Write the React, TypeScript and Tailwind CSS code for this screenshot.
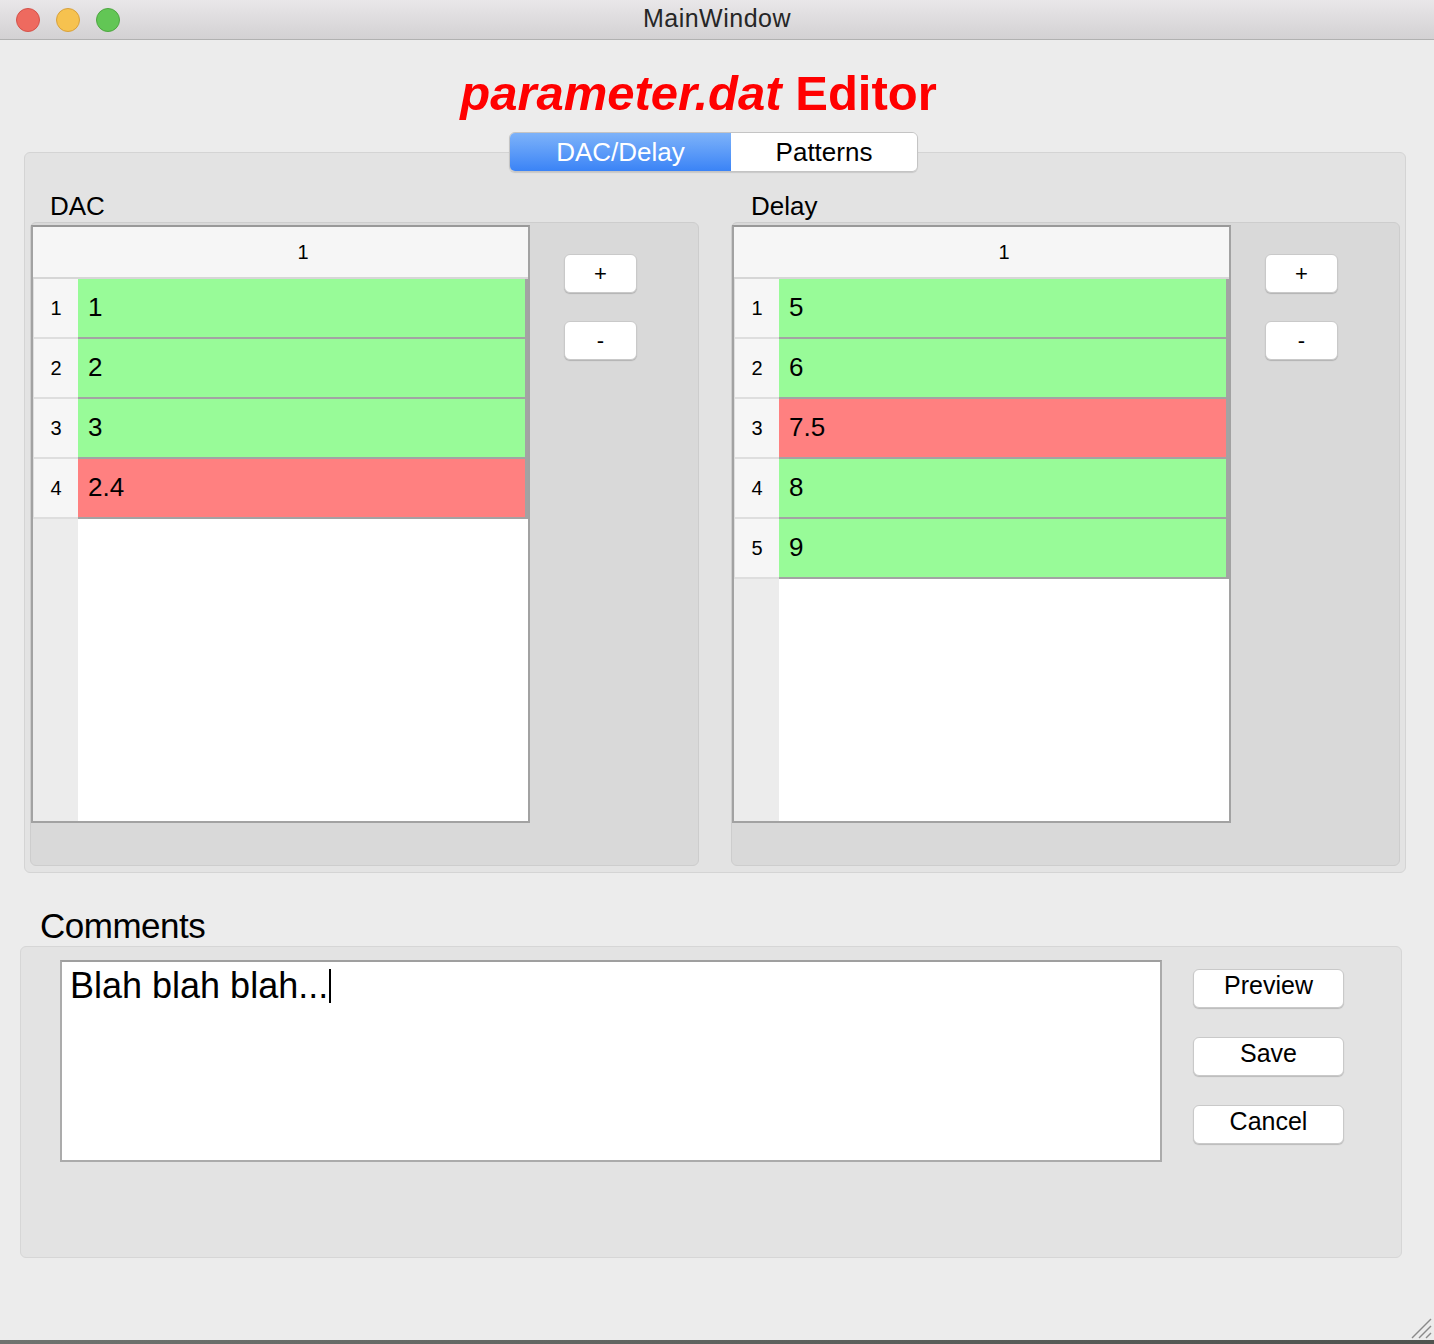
import { Fragment } from "react";

type Row = { value: string; ok: boolean };

const dacRows: Row[] = [
	{ value: "1", ok: true },
	{ value: "2", ok: true },
	{ value: "3", ok: true },
	{ value: "2.4", ok: false },
];

const delayRows: Row[] = [
	{ value: "5", ok: true },
	{ value: "6", ok: true },
	{ value: "7.5", ok: false },
	{ value: "8", ok: true },
	{ value: "9", ok: true },
];

function MacButton({ label, className }: { label: string; className: string }) {
	return (
		<button
			type="button"
			className={`flex items-center justify-center rounded-[6px] border border-[#c9c9c9] bg-white text-black shadow-[0_1px_1px_rgba(0,0,0,0.18)] ${className}`}
		>
			{label}
		</button>
	);
}

function DataTable({ rows }: { rows: Row[] }) {
	return (
		<div className="flex h-[598px] w-[499px] shrink-0 flex-col border-2 border-[#a2a2a2] border-t-[#999999] bg-white">
			{/* Header */}
			<div className="flex h-[52px] shrink-0 border-b-2 border-[#d6d6d6] bg-[#f6f6f6]">
				<div className="w-[45px]" />
				<div className="flex flex-1 items-center justify-center text-[20px] text-black">
					1
				</div>
			</div>

			{/* Rows */}
			{rows.map((row, i) => (
				<div key={i} className="flex h-[60px] shrink-0">
					<div className="flex w-[45px] items-center justify-center border-b-2 border-l border-[#dedede] bg-[#f6f6f6] pb-[1px] text-[20px] text-black">
						{i + 1}
					</div>
					<div
						className={`flex flex-1 items-center border-r-[3px] border-b-2 border-[#a3a3a3] pb-[2px] pl-[10px] text-[26px] text-black ${
							row.ok ? "bg-[#98fb98]" : "bg-[#ff8080]"
						}`}
					>
						{row.value}
					</div>
				</div>
			))}

			{/* Empty space */}
			<div className="flex flex-1">
				<div className="w-[45px] bg-[#ececec]" />
				<div className="flex-1 bg-white" />
			</div>
		</div>
	);
}

function TableGroup({ title, rows }: { title: string; rows: Row[] }) {
	return (
		<div className="flex flex-1 flex-col">
			<div className="mb-[2px] h-[26px] pl-[20px] text-[26px] leading-[24px] text-black">
				{title}
			</div>
			<div className="flex h-[644px] rounded-[6px] border border-[#cdcdcd] bg-[#d9d9d9] pt-[2px]">
				<DataTable rows={rows} />
				<div className="mt-[29px] ml-[34px] flex flex-col gap-[28px]">
					<MacButton label="+" className="h-[39px] w-[73px] text-[22px]" />
					<MacButton label="-" className="h-[39px] w-[73px] text-[22px]" />
				</div>
			</div>
		</div>
	);
}

export default function App() {
	return (
		<div className="relative flex h-[1344px] w-[1434px] flex-col overflow-hidden bg-[#ececec] font-['Liberation_Sans',Arial,Helvetica,sans-serif]">
			{/* Title bar */}
			<div className="grid h-[40px] shrink-0 grid-cols-[1fr_auto_1fr] items-center border-b border-[#b1b1b1] bg-linear-to-b from-[#e9e7e9] to-[#d3d1d3]">
				<div className="flex items-center gap-[16px] pl-[16px]">
					<span className="h-[24px] w-[24px] rounded-full border border-[#d4524a] bg-[#ee6a5f]" />
					<span className="h-[24px] w-[24px] rounded-full border border-[#d8a13c] bg-[#f6c24f]" />
					<span className="h-[24px] w-[24px] rounded-full border border-[#4ea641] bg-[#62c655]" />
				</div>
				<div className="pb-[2px] text-[25px] tracking-[0.5px] text-[#262626]">MainWindow</div>
				<div />
			</div>

			{/* Heading */}
			<div className="mt-[29px] h-[48px] pr-[37px] text-center text-[49px] leading-[48px] font-bold text-[#ff0000]">
				<span className="italic">parameter.dat</span> Editor
			</div>

			{/* Tabs */}
			<div className="relative z-10 mt-[15px] mb-[-20px] ml-[509px] flex h-[40px] w-[409px] overflow-hidden rounded-[6px] border border-[#c4c4c4] shadow-[0_1px_1px_rgba(0,0,0,0.12)]">
				<div className="flex w-[221px] items-center justify-center bg-linear-to-b from-[#7db2f9] to-[#3a83f6] text-[26px] text-white">
					DAC/Delay
				</div>
				<div className="flex flex-1 items-center justify-center bg-white text-[26px] text-black">
					Patterns
				</div>
			</div>

			{/* Tab pane */}
			<div className="ml-[24px] flex h-[721px] w-[1382px] shrink-0 gap-[32px] rounded-[6px] border border-[#d4d4d4] bg-[#e3e3e3] px-[5px] pt-[41px]">
				<TableGroup title="DAC" rows={dacRows} />
				<TableGroup title="Delay" rows={delayRows} />
			</div>

			{/* Comments */}
			<div className="mt-[37px] ml-[40px] h-[36px] text-[35px] leading-[32px] tracking-[-0.5px] text-black">
				Comments
			</div>
			<div className="ml-[20px] flex h-[312px] w-[1382px] shrink-0 rounded-[6px] border border-[#d6d6d6] bg-[#e3e3e3] pt-[13px] pl-[39px]">
				<div className="h-[202px] w-[1102px] border-2 border-[#ababab] border-t-[#9f9f9f] bg-white pt-[4px] pl-[8px]">
					<div className="flex items-center text-[36px] leading-[40px] text-black">
						<span>Blah blah blah...</span>
						<span className="ml-[1px] inline-block h-[34px] w-[2px] bg-black" />
					</div>
				</div>
				<div className="mt-[9px] ml-[31px] flex flex-col gap-[29px]">
					{["Preview", "Save", "Cancel"].map((label) => (
						<Fragment key={label}>
							<MacButton label={label} className="h-[39px] w-[151px] pb-[6px] text-[25px]" />
						</Fragment>
					))}
				</div>
			</div>

			<div className="flex-1" />

			{/* Window bottom edge */}
			<div className="h-[4px] shrink-0 bg-linear-to-r from-[#6f736f] to-[#4f534f]" />

			{/* Resize grip */}
			<svg
				className="absolute right-[2px] bottom-[5px]"
				width="22"
				height="22"
				viewBox="0 0 22 22"
			>
				<line x1="2" y1="21" x2="21" y2="2" stroke="#8a8a8a" strokeWidth="1.5" />
				<line x1="9" y1="21" x2="21" y2="9" stroke="#8a8a8a" strokeWidth="1.5" />
				<line x1="16" y1="21" x2="21" y2="16" stroke="#8a8a8a" strokeWidth="1.5" />
			</svg>
		</div>
	);
}
